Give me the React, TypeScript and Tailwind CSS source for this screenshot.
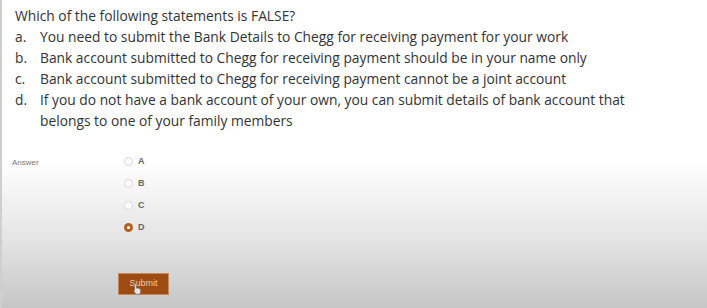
const options = [
  { letter: 'a.', text: 'You need to submit the Bank Details to Chegg for receiving payment for your work' },
  { letter: 'b.', text: 'Bank account submitted to Chegg for receiving payment should be in your name only' },
  { letter: 'c.', text: 'Bank account submitted to Chegg for receiving payment cannot be a joint account' },
  {
    letter: 'd.',
    text: 'If you do not have a bank account of your own, you can submit details of bank account that belongs to one of your family members',
  },
]

const answers = ['A', 'B', 'C', 'D']

export default function App() {
  return (
    <main className="flex h-[308px] w-[707px] flex-col overflow-hidden border-l-2 border-[#cfcfcf] bg-[linear-gradient(to_bottom,#ffffff_0px,#ffffff_160px,#e4e4e4_240px,#c6c6c6_308px)] font-['Open_Sans',sans-serif]">
      <section className="pl-[13px] pt-[5px] text-[13.8px] leading-[21px] text-[#333]">
        <h1>Which of the following statements is FALSE?</h1>
        <ol>
          {options.map((o) => (
            <li key={o.letter} className="flex">
              <span className="w-[25px] shrink-0">{o.letter}</span>
              <span className="w-[592px]">{o.text}</span>
            </li>
          ))}
        </ol>
      </section>

      <section className="mt-[24px] flex pl-[10px]">
        <div className="w-[112px] pt-[2px] font-['Liberation_Sans',sans-serif] text-[8px] text-[#777]">Answer</div>
        <div className="flex flex-col gap-[9px]">
          {answers.map((a) => (
            <label key={a} className="flex h-[13px] items-center gap-[5px]">
              {a === 'D' ? (
                <span className="flex h-[9px] w-[9px] items-center justify-center rounded-full bg-[#b5601e]">
                  <span className="h-[3px] w-[3px] rounded-full bg-white" />
                </span>
              ) : (
                <span className="h-[9px] w-[9px] rounded-full border border-[#d8d8d8] bg-white" />
              )}
              <span className="font-['Liberation_Sans',sans-serif] text-[9px] font-bold text-[#666]">{a}</span>
            </label>
          ))}
        </div>
      </section>

      <section className="mt-[39px] pl-[116px]">
        <button className="relative flex h-[22px] w-[51px] items-center justify-center border border-[#c88a5a] bg-[#9e4b12] font-['Liberation_Sans',sans-serif] text-[9px] text-[#e8cdb8]">
          Submit
          <svg className="absolute left-[14px] top-[9px]" width="9" height="12" viewBox="0 0 9 12">
            <path
              d="M2.5 1 C3.2 1 3.4 1.5 3.4 2 V5.2 C3.8 4.9 4.6 4.9 4.9 5.4 C5.3 5.1 6.1 5.2 6.3 5.8 C6.8 5.6 7.6 5.9 7.6 6.6 V8.8 C7.6 10.4 6.6 11.4 5 11.4 H4.2 C3.2 11.4 2.5 10.9 2 10.1 L0.8 8 C0.5 7.4 1.1 6.9 1.6 7.3 L1.6 2 C1.6 1.5 1.9 1 2.5 1 Z"
              fill="#e6e6e6"
              stroke="#666"
              strokeWidth="0.6"
            />
          </svg>
        </button>
      </section>
    </main>
  )
}
